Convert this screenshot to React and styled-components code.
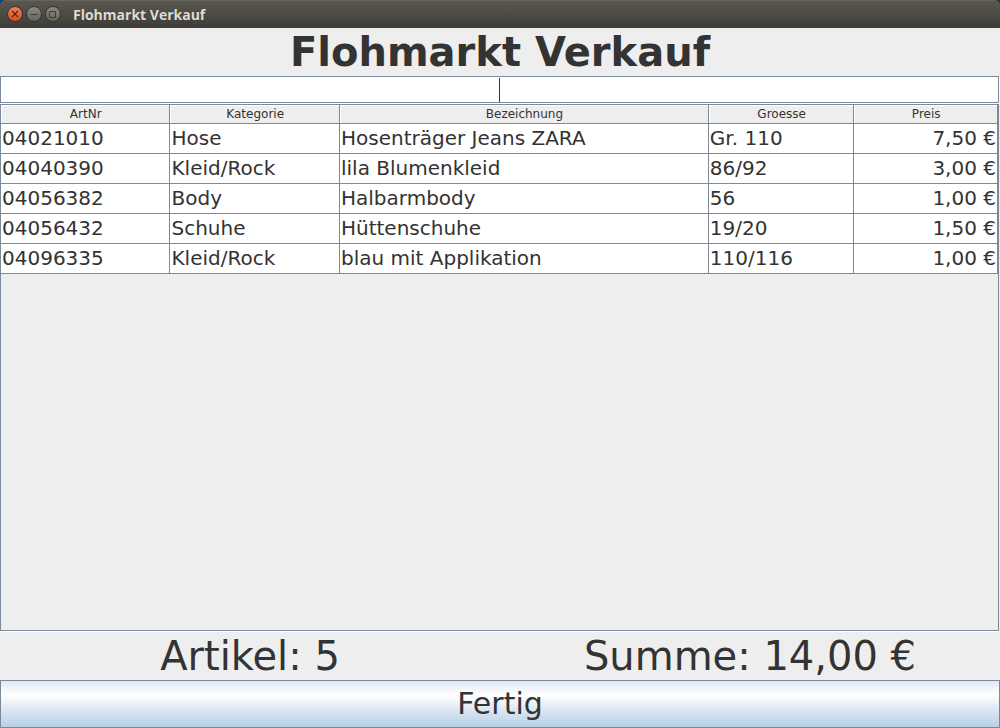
import React from "react";
import styled, { createGlobalStyle } from "styled-components";

const line = "#7a8a99";

const GlobalStyle = createGlobalStyle`
  * { box-sizing: border-box; }
  body { margin: 0; background: #eeeeee; color: #333333; font-family: "DejaVu Sans", sans-serif; }
`;

const Window = styled.main`
  display: flex;
  flex-direction: column;
  min-height: 100vh;
  background: #eeeeee;
`;

const Backdrop = styled.div`
  background: #0c3a6e;
`;

const TitleBar = styled.header`
  display: flex;
  align-items: center;
  height: 28px;
  padding: 0 7px;
  border-radius: 6px 6px 0 0;
  background: linear-gradient(#5b5850, #55534b 20%, #3d3c37);
  box-shadow: inset 0 1px 0 #68655c;
`;

const Controls = styled.div`
  display: flex;
  gap: 3px;
  margin-right: 12px;
`;

const Control = styled.button`
  display: block;
  width: 16px;
  height: 16px;
  padding: 0;
  border: 1px solid #35342f;
  border-radius: 50%;
  background: ${(p) => (p.$close ? "linear-gradient(#f4805a, #df4b1b)" : "linear-gradient(#8b8981, #66645d)")};

  svg { display: block; width: 14px; height: 14px; }
`;

const WindowTitle = styled.span`
  padding-top: 2px;
  font: bold 14px/26px "Open Sans", "Noto Sans", sans-serif;
  color: #dfdbd2;
`;

const Heading = styled.h1`
  margin: 0;
  font-size: 40px;
  line-height: 48px;
  font-weight: bold;
  text-align: center;
`;

const Entry = styled.div`
  position: relative;
  height: 28px;
  padding-right: 1px;
  background: #ffffff;
`;

const EntryField = styled.input`
  display: block;
  width: 100%;
  height: 27px;
  padding: 0 1px;
  border: 1px solid ${line};
  border-radius: 0;
  outline: none;
  background: #ffffff;
  color: #333333;
  font: 20px "DejaVu Sans", sans-serif;
  text-align: center;
  caret-color: transparent;
`;

const Caret = styled.span`
  position: absolute;
  top: 2px;
  bottom: 2px;
  right: 50%;
  width: 1px;
  background: #333333;
`;

const ScrollPane = styled.section`
  flex: 1;
  margin: 0 1px 1px 0;
  border: 1px solid ${line};
  box-shadow: 0 1px 0 #ffffff;
`;

const Table = styled.table`
  width: 100%;
  table-layout: fixed;
  border-collapse: separate;
  border-spacing: 0;
`;

const Column = styled.col`
  width: ${(p) => p.$width};
`;

const HeadCell = styled.th`
  height: 19px;
  padding: 1px 0 0 1px;
  border-right: 1px solid ${line};
  border-bottom: 1px solid ${line};
  box-shadow: inset 1px 1px 0 #ffffff;
  font-size: 12px;
  line-height: 17px;
  font-weight: normal;
`;

const Cell = styled.td`
  height: 30px;
  padding: 0 1px 1px;
  border-right: 1px solid ${line};
  border-bottom: 1px solid ${line};
  background: #ffffff;
  font-size: 20px;
  line-height: 28px;
  text-align: ${(p) => (p.$number ? "right" : "left")};
  white-space: nowrap;
  overflow: hidden;
`;

const Totals = styled.div`
  display: grid;
  grid-template-columns: 1fr 1fr;
  font-size: 40px;
  line-height: 48px;
  text-align: center;
`;

const DoneButton = styled.button`
  height: 48px;
  padding: 0;
  border: 1px solid ${line};
  border-radius: 0;
  background: linear-gradient(#dde8f3, #ffffff 30%, #dde8f3 62%, #b8cfe5);
  color: #333333;
  font: 30px/46px "DejaVu Sans", sans-serif;
`;

const columns = [
  ["ArtNr", "17%"],
  ["Kategorie", "17%"],
  ["Bezeichnung", "37%"],
  ["Groesse", "14.6%"],
  ["Preis", "14.4%"],
];

const items = [
  ["04021010", "Hose", "Hosenträger Jeans ZARA", "Gr. 110", "7,50 €"],
  ["04040390", "Kleid/Rock", "lila Blumenkleid", "86/92", "3,00 €"],
  ["04056382", "Body", "Halbarmbody", "56", "1,00 €"],
  ["04056432", "Schuhe", "Hüttenschuhe", "19/20", "1,50 €"],
  ["04096335", "Kleid/Rock", "blau mit Applikation", "110/116", "1,00 €"],
];

export default function App() {
  return (
    <Window>
      <GlobalStyle />
      <Backdrop>
        <TitleBar>
          <Controls>
            <Control type="button" $close aria-label="Schließen">
              <svg viewBox="0 0 14 14" fill="none" stroke="#4b2a1d" strokeWidth="1.2"><path d="M4 4l6 6M10 4l-6 6" /></svg>
            </Control>
            <Control type="button" aria-label="Minimieren">
              <svg viewBox="0 0 14 14" fill="none" stroke="#3b3a35"><path d="M3.5 7.5h7" /></svg>
            </Control>
            <Control type="button" aria-label="Maximieren">
              <svg viewBox="0 0 14 14" fill="none" stroke="#3b3a35"><path d="M3.5 4.5h6v6h-6z" /></svg>
            </Control>
          </Controls>
          <WindowTitle>Flohmarkt Verkauf</WindowTitle>
        </TitleBar>
      </Backdrop>
      <Heading>Flohmarkt Verkauf</Heading>
      <Entry>
        <EntryField type="text" aria-label="Artikelnummer" />
        <Caret />
      </Entry>
      <ScrollPane>
        <Table>
          <colgroup>
            {columns.map(([name, width]) => <Column key={name} $width={width} />)}
          </colgroup>
          <thead>
            <tr>{columns.map(([name]) => <HeadCell key={name} scope="col">{name}</HeadCell>)}</tr>
          </thead>
          <tbody>
            {items.map((item) => (
              <tr key={item[0]}>
                {item.map((value, i) => <Cell key={columns[i][0]} $number={i === 4}>{value}</Cell>)}
              </tr>
            ))}
          </tbody>
        </Table>
      </ScrollPane>
      <Totals>
        <span>Artikel: 5</span>
        <span>Summe: 14,00 €</span>
      </Totals>
      <DoneButton type="button">Fertig</DoneButton>
    </Window>
  );
}
